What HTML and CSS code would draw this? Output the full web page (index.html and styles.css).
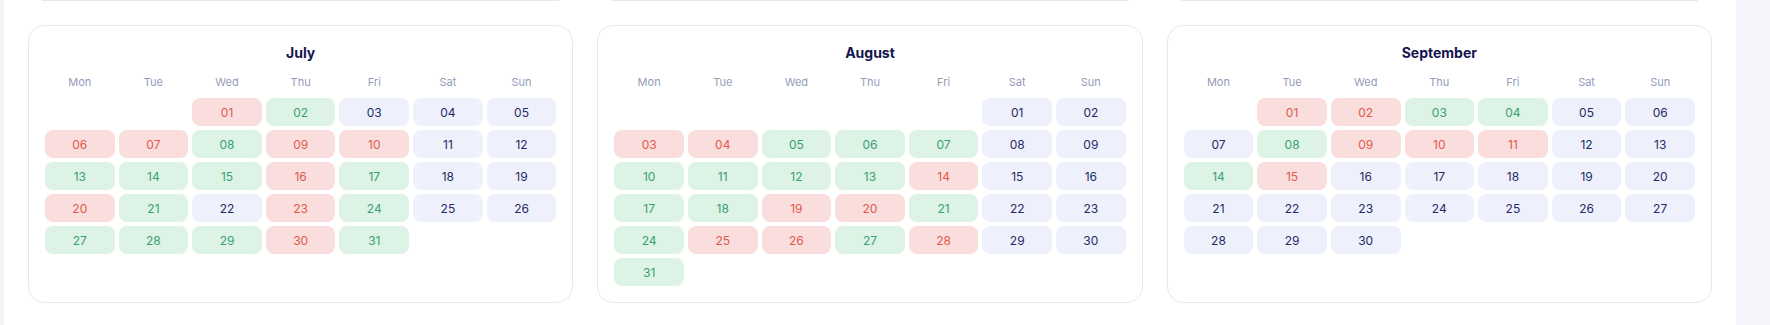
FILE: index.html
```html
<!DOCTYPE html>
<html lang="en">
<head>
<meta charset="utf-8">
<title>Calendar</title>
<link rel="stylesheet" href="styles.css">
</head>
<body>
<div class="strip-left"></div>
<main class="main">
  <div class="grid">
    <div class="tail"></div>
    <div class="tail"></div>
    <div class="tail"></div>

    <section class="card">
      <h2 class="title">July</h2>
      <div class="week"><span>Mon</span><span>Tue</span><span>Wed</span><span>Thu</span><span>Fri</span><span>Sat</span><span>Sun</span></div>
      <div class="days">
        <div></div><div></div>
        <div class="d r">01</div><div class="d g">02</div><div class="d b">03</div><div class="d b">04</div><div class="d b">05</div>
        <div class="d r">06</div><div class="d r">07</div><div class="d g">08</div><div class="d r">09</div><div class="d r">10</div><div class="d b">11</div><div class="d b">12</div>
        <div class="d g">13</div><div class="d g">14</div><div class="d g">15</div><div class="d r">16</div><div class="d g">17</div><div class="d b">18</div><div class="d b">19</div>
        <div class="d r">20</div><div class="d g">21</div><div class="d b">22</div><div class="d r">23</div><div class="d g">24</div><div class="d b">25</div><div class="d b">26</div>
        <div class="d g">27</div><div class="d g">28</div><div class="d g">29</div><div class="d r">30</div><div class="d g">31</div>
      </div>
    </section>

    <section class="card">
      <h2 class="title">August</h2>
      <div class="week"><span>Mon</span><span>Tue</span><span>Wed</span><span>Thu</span><span>Fri</span><span>Sat</span><span>Sun</span></div>
      <div class="days">
        <div></div><div></div><div></div><div></div><div></div>
        <div class="d b">01</div><div class="d b">02</div>
        <div class="d r">03</div><div class="d r">04</div><div class="d g">05</div><div class="d g">06</div><div class="d g">07</div><div class="d b">08</div><div class="d b">09</div>
        <div class="d g">10</div><div class="d g">11</div><div class="d g">12</div><div class="d g">13</div><div class="d r">14</div><div class="d b">15</div><div class="d b">16</div>
        <div class="d g">17</div><div class="d g">18</div><div class="d r">19</div><div class="d r">20</div><div class="d g">21</div><div class="d b">22</div><div class="d b">23</div>
        <div class="d g">24</div><div class="d r">25</div><div class="d r">26</div><div class="d g">27</div><div class="d r">28</div><div class="d b">29</div><div class="d b">30</div>
        <div class="d g">31</div>
      </div>
    </section>

    <section class="card">
      <h2 class="title">September</h2>
      <div class="week"><span>Mon</span><span>Tue</span><span>Wed</span><span>Thu</span><span>Fri</span><span>Sat</span><span>Sun</span></div>
      <div class="days">
        <div></div>
        <div class="d r">01</div><div class="d r">02</div><div class="d g">03</div><div class="d g">04</div><div class="d b">05</div><div class="d b">06</div>
        <div class="d b">07</div><div class="d g">08</div><div class="d r">09</div><div class="d r">10</div><div class="d r">11</div><div class="d b">12</div><div class="d b">13</div>
        <div class="d g">14</div><div class="d r">15</div><div class="d b">16</div><div class="d b">17</div><div class="d b">18</div><div class="d b">19</div><div class="d b">20</div>
        <div class="d b">21</div><div class="d b">22</div><div class="d b">23</div><div class="d b">24</div><div class="d b">25</div><div class="d b">26</div><div class="d b">27</div>
        <div class="d b">28</div><div class="d b">29</div><div class="d b">30</div>
      </div>
    </section>
  </div>
</main>
<div class="strip-right"></div>
</body>
</html>
```

FILE: styles.css
```css
* { box-sizing: border-box; }
html, body { margin: 0; padding: 0; height: 100%; }
body {
  display: flex;
  background: #ffffff;
  font-family: Inter, "Noto Sans", sans-serif;
  overflow: hidden;
}
.strip-left { width: 4px; flex: none; background: #f3f4f9; }
.strip-right { width: 34px; flex: none; background: #f4f5fa; }
.main { flex: 1; padding: 0 24px; background: #ffffff; }
.grid {
  display: grid;
  grid-template-columns: repeat(3, 1fr);
  column-gap: 24px;
  row-gap: 24px;
}
.tail {
  height: 1px;
  margin: 0 14px;
  background: #e6e9f3;
}
.card {
  border: 1px solid #e6e9f3;
  border-radius: 16px;
  padding: 16px;
  background: #fff;
}
.title {
  margin: 0;
  text-align: center;
  font-size: 14px;
  line-height: 22px;
  font-weight: 700;
  color: #14144f;
}
.week {
  display: grid;
  grid-template-columns: repeat(7, 1fr);
  column-gap: 4px;
  margin-top: 10px;
  margin-bottom: 8px;
  font-size: 11px;
  line-height: 16px;
  color: #949cb9;
  text-align: center;
}
.days {
  display: grid;
  grid-template-columns: repeat(7, 1fr);
  grid-auto-rows: 28px;
  gap: 4px;
}
.d {
  border-radius: 8px;
  display: flex;
  align-items: center;
  justify-content: center;
  font-size: 12px;
}
.r { background: #f9dedd; color: #e05a4b; }
.g { background: #ddf3e5; color: #3a9f74; }
.b { background: #eef0fc; color: #232b63; }
```
